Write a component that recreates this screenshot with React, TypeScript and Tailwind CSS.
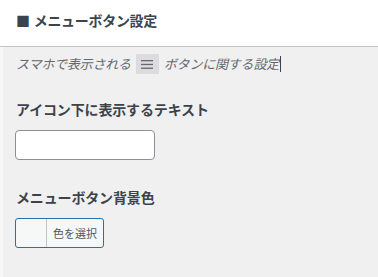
import React from "react";

export default function App() {
  const font = { fontFamily: '"Noto Sans CJK JP", "Noto Sans", sans-serif' };
  return (
    <div className="w-[378px] h-[277px] bg-[#f0f0f1] overflow-hidden flex flex-col" style={font}>
      <div className="h-[47px] bg-white border-b border-[#c3c4c7] pl-4 pt-[10px] shrink-0">
        <h2 className="text-[14px] font-bold text-[#3c434a] leading-[20px] flex items-center tracking-[-0.3px]">
          <span className="mr-[4px]">■</span>
          <span>メニューボタン設定</span>
        </h2>
      </div>
      <div className="flex-1 border-l-[3px] border-[#f7f7f7] pl-[13px]">
        <div className="flex items-center h-[20px] mt-[7px] text-[13px] italic text-[#646970] tracking-[-0.2px]">
          <span>スマホで表示される</span>
          <span className="mx-[5px] w-[23px] h-[20px] bg-[#dcdcde] flex items-center justify-center">
            <svg width="12" height="9" viewBox="0 0 12 9">
              <rect x="0" y="0" width="12" height="1.3" fill="#646970" />
              <rect x="0" y="3.8" width="12" height="1.3" fill="#646970" />
              <rect x="0" y="7.6" width="12" height="1.3" fill="#646970" />
            </svg>
          </span>
          <span>ボタンに関する設定</span>
          <span className="w-px h-[16px] bg-[#3c434a] ml-[1px]" />
        </div>
        <div className="mt-[25px] text-[14px] font-bold text-[#3c434a] leading-[20px] tracking-[-0.15px]">
          アイコン下に表示するテキスト
        </div>
        <input
          type="text"
          className="block mt-[11px] w-[140px] h-[30px] bg-white border border-[#8c8f94] rounded-[4px] -ml-px"
        />
        <div className="mt-[27px] text-[14px] font-bold text-[#3c434a] leading-[20px] tracking-[-0.15px]">
          メニューボタン背景色
        </div>
        <div className="mt-[11px] -ml-px w-[89px] h-[30px] border border-[#2271b1] rounded-[3px] bg-[#f6f7f7] flex">
          <span className="w-[31px] h-full border-r border-[#c3c4c7]" />
          <span className="flex-1 flex items-center pl-[6px] text-[11px] text-[#50575e]">色を選択</span>
        </div>
      </div>
    </div>
  );
}
